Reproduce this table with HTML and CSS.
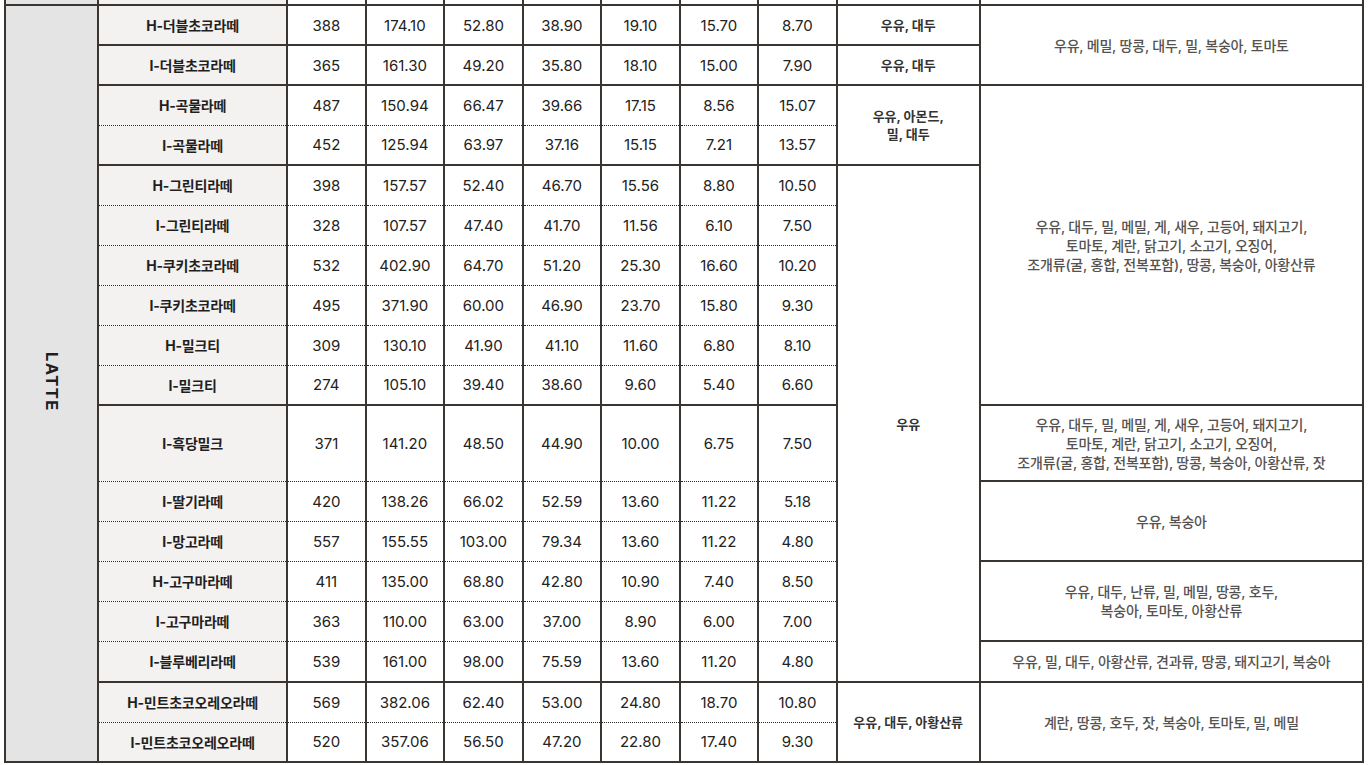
FILE: index.html
```html
<!DOCTYPE html>
<html lang="ko">
<head>
<meta charset="utf-8">
<title>LATTE 영양성분</title>
<link rel="stylesheet" href="styles.css">
</head>
<body>
<div class="wrap">
<table class="nut">
<colgroup>
<col class="c-cat"><col class="c-name">
<col class="c-num"><col class="c-num"><col class="c-num"><col class="c-num"><col class="c-num"><col class="c-num"><col class="c-num">
<col class="c-al1"><col class="c-al2">
</colgroup>
<tbody>
<tr class="prev"><td class="cat"></td><td class="nm"></td><td></td><td></td><td></td><td></td><td></td><td></td><td></td><td></td><td></td></tr>
<tr class="solid">
<td class="cat sp" rowspan="18"><span class="cat-label">LATTE</span></td>
<td class="nm">H-더블초코라떼</td><td class="num">388</td><td class="num">174.10</td><td class="num">52.80</td><td class="num">38.90</td><td class="num">19.10</td><td class="num">15.70</td><td class="num">8.70</td>
<td class="al1">우유, 대두</td>
<td class="al2 sp" rowspan="2">우유, 메밀, 땅콩, 대두, 밀, 복숭아, 토마토</td>
</tr>
<tr class="solid">
<td class="nm">I-더블초코라떼</td><td class="num">365</td><td class="num">161.30</td><td class="num">49.20</td><td class="num">35.80</td><td class="num">18.10</td><td class="num">15.00</td><td class="num">7.90</td>
<td class="al1">우유, 대두</td>
</tr>
<tr class="dot">
<td class="nm">H-곡물라떼</td><td class="num">487</td><td class="num">150.94</td><td class="num">66.47</td><td class="num">39.66</td><td class="num">17.15</td><td class="num">8.56</td><td class="num">15.07</td>
<td class="al1 sp" rowspan="2">우유, 아몬드,<br>밀, 대두</td>
<td class="al2 sp" rowspan="8">우유, 대두, 밀, 메밀, 게, 새우, 고등어, 돼지고기,<br>토마토, 계란, 닭고기, 소고기, 오징어,<br>조개류(굴, 홍합, 전복포함), 땅콩, 복숭아, 아황산류</td>
</tr>
<tr class="solid">
<td class="nm">I-곡물라떼</td><td class="num">452</td><td class="num">125.94</td><td class="num">63.97</td><td class="num">37.16</td><td class="num">15.15</td><td class="num">7.21</td><td class="num">13.57</td>
</tr>
<tr class="dot">
<td class="nm">H-그린티라떼</td><td class="num">398</td><td class="num">157.57</td><td class="num">52.40</td><td class="num">46.70</td><td class="num">15.56</td><td class="num">8.80</td><td class="num">10.50</td>
<td class="al1 sp" rowspan="12">우유</td>
</tr>
<tr class="dot">
<td class="nm">I-그린티라떼</td><td class="num">328</td><td class="num">107.57</td><td class="num">47.40</td><td class="num">41.70</td><td class="num">11.56</td><td class="num">6.10</td><td class="num">7.50</td>
</tr>
<tr class="dot">
<td class="nm">H-쿠키초코라떼</td><td class="num">532</td><td class="num">402.90</td><td class="num">64.70</td><td class="num">51.20</td><td class="num">25.30</td><td class="num">16.60</td><td class="num">10.20</td>
</tr>
<tr class="dot">
<td class="nm">I-쿠키초코라떼</td><td class="num">495</td><td class="num">371.90</td><td class="num">60.00</td><td class="num">46.90</td><td class="num">23.70</td><td class="num">15.80</td><td class="num">9.30</td>
</tr>
<tr class="dot">
<td class="nm">H-밀크티</td><td class="num">309</td><td class="num">130.10</td><td class="num">41.90</td><td class="num">41.10</td><td class="num">11.60</td><td class="num">6.80</td><td class="num">8.10</td>
</tr>
<tr class="solid">
<td class="nm">I-밀크티</td><td class="num">274</td><td class="num">105.10</td><td class="num">39.40</td><td class="num">38.60</td><td class="num">9.60</td><td class="num">5.40</td><td class="num">6.60</td>
</tr>
<tr class="dot tall">
<td class="nm">I-흑당밀크</td><td class="num">371</td><td class="num">141.20</td><td class="num">48.50</td><td class="num">44.90</td><td class="num">10.00</td><td class="num">6.75</td><td class="num">7.50</td>
<td class="al2 sp">우유, 대두, 밀, 메밀, 게, 새우, 고등어, 돼지고기,<br>토마토, 계란, 닭고기, 소고기, 오징어,<br>조개류(굴, 홍합, 전복포함), 땅콩, 복숭아, 아황산류, 잣</td>
</tr>
<tr class="dot">
<td class="nm">I-딸기라떼</td><td class="num">420</td><td class="num">138.26</td><td class="num">66.02</td><td class="num">52.59</td><td class="num">13.60</td><td class="num">11.22</td><td class="num">5.18</td>
<td class="al2 sp" rowspan="2">우유, 복숭아</td>
</tr>
<tr class="dot">
<td class="nm">I-망고라떼</td><td class="num">557</td><td class="num">155.55</td><td class="num">103.00</td><td class="num">79.34</td><td class="num">13.60</td><td class="num">11.22</td><td class="num">4.80</td>
</tr>
<tr class="dot">
<td class="nm">H-고구마라떼</td><td class="num">411</td><td class="num">135.00</td><td class="num">68.80</td><td class="num">42.80</td><td class="num">10.90</td><td class="num">7.40</td><td class="num">8.50</td>
<td class="al2 sp" rowspan="2">우유, 대두, 난류, 밀, 메밀, 땅콩, 호두,<br>복숭아, 토마토, 아황산류</td>
</tr>
<tr class="dot">
<td class="nm">I-고구마라떼</td><td class="num">363</td><td class="num">110.00</td><td class="num">63.00</td><td class="num">37.00</td><td class="num">8.90</td><td class="num">6.00</td><td class="num">7.00</td>
</tr>
<tr class="solid r41">
<td class="nm">I-블루베리라떼</td><td class="num">539</td><td class="num">161.00</td><td class="num">98.00</td><td class="num">75.59</td><td class="num">13.60</td><td class="num">11.20</td><td class="num">4.80</td>
<td class="al2 sp">우유, 밀, 대두, 아황산류, 견과류, 땅콩, 돼지고기, 복숭아</td>
</tr>
<tr class="dot">
<td class="nm">H-민트초코오레오라떼</td><td class="num">569</td><td class="num">382.06</td><td class="num">62.40</td><td class="num">53.00</td><td class="num">24.80</td><td class="num">18.70</td><td class="num">10.80</td>
<td class="al1 sp" rowspan="2">우유, 대두, 아황산류</td>
<td class="al2 sp" rowspan="2">계란, 땅콩, 호두, 잣, 복숭아, 토마토, 밀, 메밀</td>
</tr>
<tr class="solid">
<td class="nm">I-민트초코오레오라떼</td><td class="num">520</td><td class="num">357.06</td><td class="num">56.50</td><td class="num">47.20</td><td class="num">22.80</td><td class="num">17.40</td><td class="num">9.30</td>
</tr>
</tbody>
</table>
</div>
</body>
</html>
```

FILE: styles.css
```css
html, body {
  margin: 0;
  padding: 0;
  background: #ffffff;
}

.wrap {
  padding: 0 0 0 4px;
}

.nut {
  border-collapse: collapse;
  table-layout: fixed;
  width: 1360px;
  font-family: Inter, "Noto Sans CJK KR", sans-serif;
  color: #222222;
}

.c-cat { width: 93px; }
.c-name { width: 189px; }
.c-num { width: 78.5px; }
.c-al1 { width: 143px; }
.c-al2 { width: 383px; }

.nut td {
  border-left: 2px solid #3a3531;
  border-right: 2px solid #3a3531;
  border-top: none;
  border-bottom: none;
  padding: 0;
  text-align: center;
  vertical-align: middle;
  overflow: hidden;
}

.nut tr { height: 40px; }
.nut tr.prev { height: 4px; }
.nut tr.tall { height: 76px; }
.nut tr.r41 { height: 41px; }

.nut tr.prev td {
  border-bottom: 2px solid #3a3531;
  height: 4px;
  line-height: 0;
  font-size: 0;
}

.nut tr.solid td {
  border-bottom: 2px solid #3a3531;
}

.nut tr.dot td.nm,
.nut tr.dot td.num {
  border-bottom: 1px dotted #2e2925;
}

.nut td.sp {
  border-bottom: 2px solid #3a3531;
}

.nut td.cat {
  background: #e4e4e4;
}

.cat-label {
  display: inline-block;
  writing-mode: vertical-rl;
  font-weight: 700;
  font-size: 16.5px;
  letter-spacing: 1.5px;
  color: #1e1e1e;
}

.nut td.nm {
  background: #f3f2f0;
  font-weight: 700;
  font-size: 14px;
  letter-spacing: -0.2px;
  color: #1f1f1f;
}

.nut td.num {
  font-size: 15px;
  font-weight: 400;
  color: #222222;
}

.nut td.al1 {
  font-size: 13px;
  font-weight: 700;
  line-height: 18px;
  color: #333333;
}

.nut td.al2 {
  font-size: 14px;
  font-weight: 500;
  line-height: 19px;
  letter-spacing: -0.2px;
  color: #555250;
}
```
